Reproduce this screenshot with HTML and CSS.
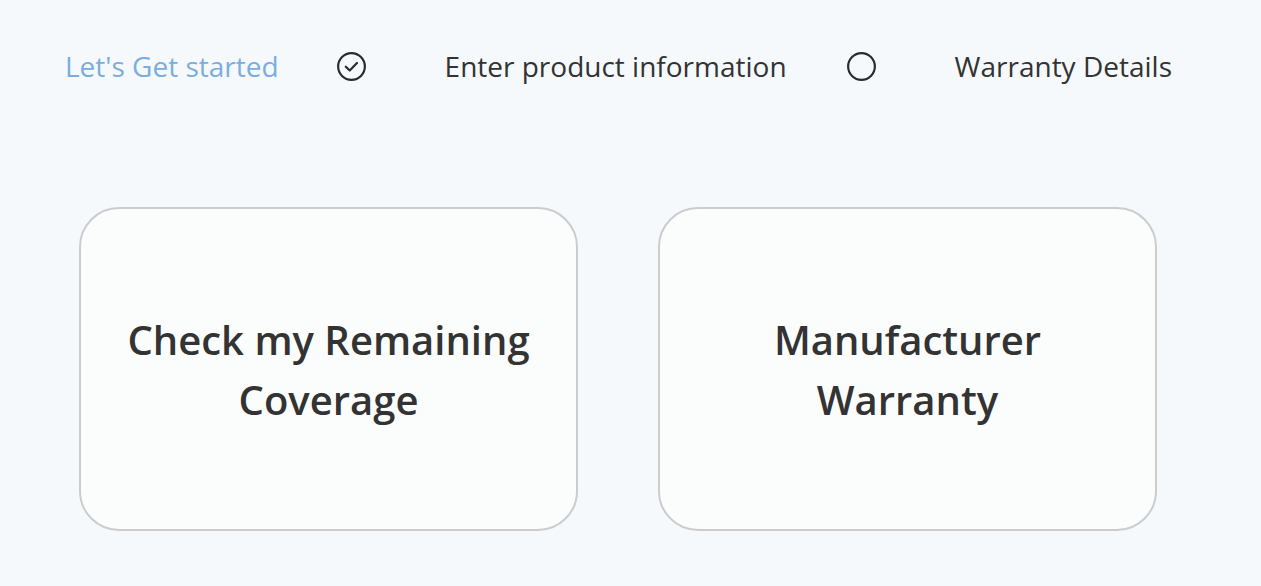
FILE: index.html
```html
<!DOCTYPE html>
<html lang="en">
<head>
<meta charset="utf-8">
<title>Warranty</title>
<link rel="stylesheet" href="styles.css">
</head>
<body>
<div class="page">
  <nav class="steps">
    <span class="step-label active">Let's Get started</span>
    <svg class="step-icon first" width="29" height="29" viewBox="0 0 28 28" aria-hidden="true">
      <circle cx="14" cy="14" r="12.9" fill="none" stroke="#2b2b2b" stroke-width="2.1"/>
      <path d="M8.5 14.2 L12.3 17.8 L19.3 10.6" fill="none" stroke="#2b2b2b" stroke-width="2.1" stroke-linecap="round" stroke-linejoin="round"/>
    </svg>
    <span class="step-label">Enter product information</span>
    <svg class="step-icon second" width="29" height="29" viewBox="0 0 28 28" aria-hidden="true">
      <circle cx="14" cy="14" r="12.9" fill="none" stroke="#2b2b2b" stroke-width="2.1"/>
    </svg>
    <span class="step-label">Warranty Details</span>
  </nav>
  <div class="cards">
    <div class="card">Check my Remaining Coverage</div>
    <div class="card">Manufacturer Warranty</div>
  </div>
</div>
</body>
</html>
```
FILE: styles.css
```css
html, body {
  margin: 0;
  padding: 0;
  background: #f5f9fc;
}
body {
  font-family: "Open Sans", "Liberation Sans", sans-serif;
  color: #333333;
}
.page {
  padding: 45px 0 0 65px;
}
.steps {
  display: flex;
  align-items: center;
  height: 42px;
}
.step-label {
  font-size: 28px;
  line-height: 42px;
  color: #333333;
}
.step-label.active {
  color: #7aaedf;
}
.step-icon {
  display: block;
  margin-right: 79px;
}
.step-icon.first {
  margin-left: 58px;
}
.step-icon.second {
  margin-left: 60px;
}
.cards {
  display: flex;
  gap: 80px;
  margin-top: 120px;
  margin-left: 14px;
}
.card {
  box-sizing: border-box;
  width: 499px;
  height: 324px;
  border: 2px solid #cccccc;
  border-radius: 40px;
  background: #fbfcfc;
  display: flex;
  align-items: center;
  justify-content: center;
  text-align: center;
  padding: 1px 30px 0;
  font-size: 40px;
  font-weight: 600;
  line-height: 60px;
  color: #333333;
}
```
